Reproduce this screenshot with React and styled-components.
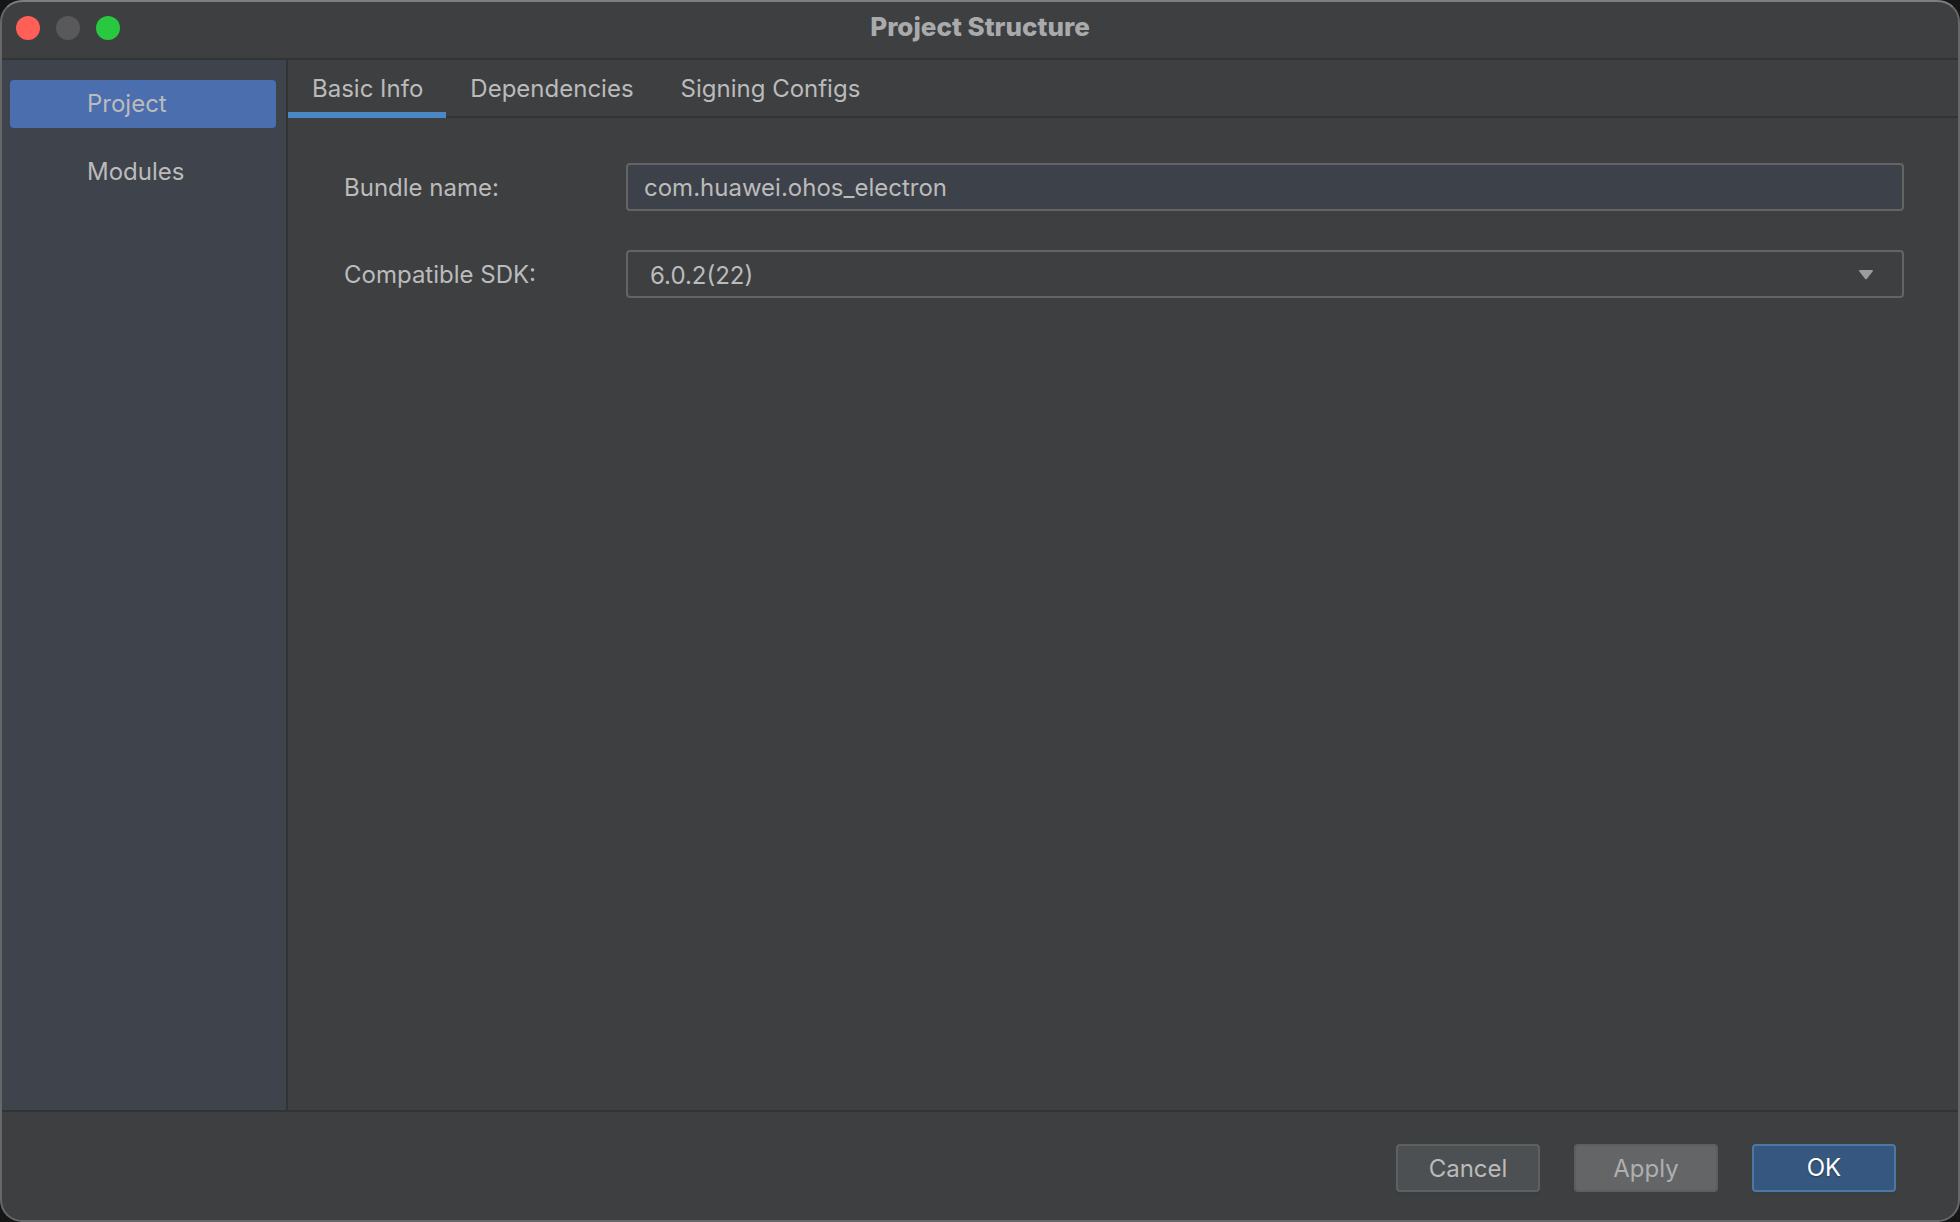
import React, { useState } from 'react';
import styled, { createGlobalStyle } from 'styled-components';

/**
 * Base colors
 */
const COLORS = {
  panel: '#3e3f41',
  sidebar: '#3f434c',
  line: '#323334',
  text: '#bbbbbb',
  selection: '#4b6eaf',
  underline: '#4a88c7',
  fieldBg: '#3d4149',
  fieldBorder: '#646464',
};

const BUTTON_VARIANTS = {
  normal: { bg: '#4c5052', border: '#5e6162', text: '#bbbbbb', shadow: '#393e41' },
  disabled: { bg: '#646567', border: '#5d5e60', text: '#aeafb1', shadow: 'transparent' },
  primary: { bg: '#365880', border: '#4c78a5', text: '#ffffff', shadow: '#393e41' },
};

const GlobalStyle = createGlobalStyle`
  * {
    box-sizing: border-box;
  }

  body {
    margin: 0;
    background: #161617;
    color: ${COLORS.text};
    font-family: Inter, 'Liberation Sans', sans-serif;
    font-size: 24px;
    line-height: 28px;
  }

  button,
  input,
  select {
    font: inherit;
    color: inherit;
  }
`;

const Window = styled.div`
  display: flex;
  flex-direction: column;
  min-height: 100vh;
  overflow: hidden;
  background: ${COLORS.panel};
  border: 2px solid #666769;
  border-top-color: #7d7e80;
  border-radius: 22px;
`;

const TitleBar = styled.header`
  display: grid;
  grid-template-columns: 1fr auto 1fr;
  align-items: start;
  height: 58px;
  padding: 14px;
  border-bottom: 2px solid ${COLORS.line};
`;

const WindowControls = styled.div`
  display: flex;
  gap: 16px;
`;

const WindowControl = styled.button`
  width: 24px;
  height: 24px;
  padding: 0;
  border: 0;
  border-radius: 50%;
  background: ${({ $color }) => $color};
`;

const Title = styled.h1`
  margin: 0;
  color: #a9aaac;
  font-size: 26px;
  font-weight: 800;
  line-height: 22px;
`;

const Body = styled.div`
  display: flex;
  flex: 1;
`;

const Sidebar = styled.nav`
  display: flex;
  flex-direction: column;
  flex: none;
  gap: 20px;
  width: 286px;
  padding: 20px 10px 20px 8px;
  background: ${COLORS.sidebar};
  border-right: 2px solid ${COLORS.line};
`;

const SidebarItem = styled.button`
  height: 48px;
  padding: 0 0 0 77px;
  border: 0;
  border-radius: 4px;
  background: ${({ $active }) => ($active ? COLORS.selection : 'transparent')};
  text-align: left;
`;

const Content = styled.main`
  flex: 1;
  min-width: 0;
`;

const TabBar = styled.div`
  display: flex;
  height: 58px;
  box-shadow: inset 0 -2px ${COLORS.line};
`;

const Tab = styled.button`
  padding: 0 23px 0 24px;
  border: 0;
  border-top: 6px solid transparent;
  border-bottom: 6px solid ${({ $active }) => ($active ? COLORS.underline : 'transparent')};
  background: none;
`;

const Form = styled.form`
  display: grid;
  grid-template-columns: 282px 1fr;
  align-items: center;
  row-gap: 39px;
  padding: 45px 54px 45px 56px;
`;

const Label = styled.label`
  padding-top: 2px;
`;

const TextField = styled.input`
  width: 100%;
  height: 48px;
  padding: 0 16px;
  border: 2px solid ${COLORS.fieldBorder};
  border-radius: 4px;
  background: ${COLORS.fieldBg};
  outline: none;
`;

const SelectBox = styled.div`
  display: grid;
  align-items: center;

  > * {
    grid-area: 1 / 1;
  }

  svg {
    justify-self: end;
    margin: 2px 31px 0 0;
    pointer-events: none;
  }
`;

const Select = styled.select`
  width: 100%;
  height: 48px;
  padding: 3px 48px 0 22px;
  border: 2px solid ${COLORS.fieldBorder};
  border-radius: 4px;
  background: ${COLORS.panel};
  appearance: none;
  outline: none;
`;

const Footer = styled.footer`
  display: flex;
  justify-content: flex-end;
  gap: 34px;
  padding: 32px 62px 28px;
  border-top: 2px solid ${COLORS.line};
`;

const DialogButton = styled.button`
  width: 144px;
  height: 48px;
  padding: ${({ $variant }) => ($variant === 'primary' ? 0 : '2px 0 0')};
  border: 2px solid ${({ $variant }) => BUTTON_VARIANTS[$variant].border};
  border-radius: 4px;
  background: ${({ $variant }) => BUTTON_VARIANTS[$variant].bg};
  box-shadow: 0 4px ${({ $variant }) => BUTTON_VARIANTS[$variant].shadow};
  color: ${({ $variant }) => BUTTON_VARIANTS[$variant].text};
  text-shadow: ${({ $variant }) => ($variant === 'primary' ? '0 1px 2px rgba(0, 0, 0, 0.35)' : 'none')};
`;

const SECTIONS = ['Project', 'Modules'];
const TABS = ['Basic Info', 'Dependencies', 'Signing Configs'];

const App = () => {
  const [section, setSection] = useState('Project');
  const [tab, setTab] = useState('Basic Info');
  const [bundleName, setBundleName] = useState('com.huawei.ohos_electron');

  return (
    <>
      <GlobalStyle />
      <Window>
        <TitleBar>
          <WindowControls>
            <WindowControl $color="#ff5f57" aria-label="Close" />
            <WindowControl $color="#59595b" aria-label="Minimize" disabled />
            <WindowControl $color="#28c840" aria-label="Zoom" />
          </WindowControls>
          <Title>Project Structure</Title>
        </TitleBar>

        <Body>
          <Sidebar>
            {SECTIONS.map((name) => (
              <SidebarItem key={name} $active={name === section} onClick={() => setSection(name)}>
                {name}
              </SidebarItem>
            ))}
          </Sidebar>

          <Content>
            <TabBar role="tablist">
              {TABS.map((name) => (
                <Tab
                  key={name}
                  role="tab"
                  aria-selected={name === tab}
                  $active={name === tab}
                  onClick={() => setTab(name)}
                >
                  {name}
                </Tab>
              ))}
            </TabBar>

            <Form>
              <Label htmlFor="bundle-name">Bundle name:</Label>
              <TextField
                id="bundle-name"
                type="text"
                spellCheck={false}
                value={bundleName}
                onChange={(e) => setBundleName(e.target.value)}
              />

              <Label htmlFor="compatible-sdk">Compatible SDK:</Label>
              <SelectBox>
                <Select id="compatible-sdk" defaultValue="6.0.2(22)">
                  <option>6.0.2(22)</option>
                </Select>
                <svg width="14" height="10" viewBox="0 0 14 10" aria-hidden="true">
                  <path d="M0.6 0h12.8q0.8 0.6 0.2 1.5L8 8.8Q7 9.8 6 8.8L0.4 1.5Q-0.2 0.6 0.6 0z" fill="#9c9da0" />
                </svg>
              </SelectBox>
            </Form>
          </Content>
        </Body>

        <Footer>
          <DialogButton $variant="normal">Cancel</DialogButton>
          <DialogButton $variant="disabled" disabled>
            Apply
          </DialogButton>
          <DialogButton $variant="primary">OK</DialogButton>
        </Footer>
      </Window>
    </>
  );
};

export default App;
